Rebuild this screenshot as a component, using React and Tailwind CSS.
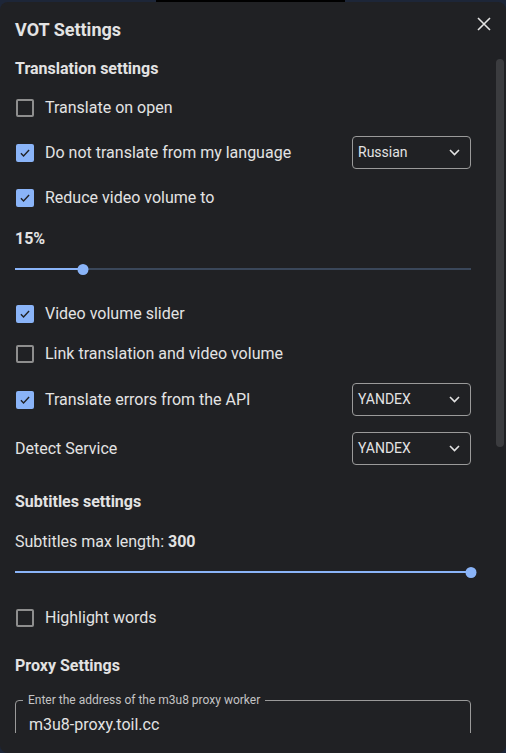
import React from "react";

const Check = ({ checked }) =>
  checked ? (
    <div className="w-[18px] h-[18px] rounded-[2px] bg-[#8ab4f8] flex items-center justify-center shrink-0">
      <svg width="14" height="14" viewBox="0 0 24 24" fill="none">
        <path d="M5 12.5l4.5 4.5L19 7" stroke="#202124" strokeWidth="2.4" />
      </svg>
    </div>
  ) : (
    <div className="w-[18px] h-[18px] rounded-[2px] border-2 border-[#8e8e8e] shrink-0" />
  );

const Select = ({ value }) => (
  <div className="w-[119px] h-[33px] border border-[#9a9a9a] rounded-[4px] flex items-center justify-between pl-[5px] pr-[10px]">
    <span className="text-[14px] text-[#e3e3e3]">{value}</span>
    <svg width="11" height="7" viewBox="0 0 11 7" fill="none">
      <path d="M1 1l4.5 4.5L10 1" stroke="#e3e3e3" strokeWidth="1.6" />
    </svg>
  </div>
);

const CheckRow = ({ checked, label, select, mt }) => (
  <div className={`flex items-center justify-between ${mt} ${select ? "h-[33px]" : "h-[24px]"}`}>
    <div className="flex items-center gap-[11px] pl-[1px]">
      <Check checked={checked} />
      <span className="text-[16px] text-[#e3e3e3]">{label}</span>
    </div>
    {select && <Select value={select} />}
  </div>
);

const Slider = ({ pct, mt }) => (
  <div className={`relative h-[12px] ${mt} flex items-center`}>
    <div className="h-[2px] w-full bg-[#3a475a] flex">
      <div className="h-full bg-[#8ab4f8]" style={{ width: `${pct}%` }} />
    </div>
    <div
      className="absolute top-[1px] w-[11px] h-[11px] rounded-full bg-[#8ab4f8] -translate-x-1/2"
      style={{ left: `${pct}%` }}
    />
  </div>
);

export default function App() {
  return (
    <div
      className="w-[506px] h-[753px] bg-[#1d2638] pt-[2px] relative overflow-hidden"
      style={{ fontFamily: "Roboto, 'Noto Sans', sans-serif" }}
    >
      <div className="absolute left-[156px] top-0 w-[189px] h-[2px] bg-black" />
      <div className="relative h-[751px] bg-[#202124] rounded-[8px] flex flex-col">
        <div className="flex items-start justify-between pl-[15px] pr-[14px] pt-[16px] h-[47px]">
          <h1 className="text-[18px] leading-[24px] font-bold text-[#e3e3e3]">VOT Settings</h1>
          <svg width="16" height="16" viewBox="0 0 16 16" className="mt-[-2px]">
            <path d="M2 2l12 12M14 2L2 14" stroke="#e3e3e3" strokeWidth="1.6" />
          </svg>
        </div>
        <div className="flex-1 overflow-hidden">
          <div className="flex flex-col pl-[15px] pr-[35px] pt-[10px]">
            <div className="h-[20px] text-[16px] leading-[20px] font-bold text-[#e3e3e3]">Translation settings</div>
            <CheckRow mt="mt-[17px]" checked={false} label="Translate on open" />
            <CheckRow mt="mt-[16px]" checked label="Do not translate from my language" select="Russian" />
            <CheckRow mt="mt-[17px]" checked label="Reduce video volume to" />
            <div className="mt-[19px] h-[20px] text-[16px] leading-[20px] font-bold text-[#e3e3e3]">15%</div>
            <Slider pct={15} mt="mt-[14px]" />
            <CheckRow mt="mt-[27px]" checked label="Video volume slider" />
            <CheckRow mt="mt-[16px]" checked={false} label="Link translation and video volume" />
            <CheckRow mt="mt-[17px]" checked label="Translate errors from the API" select="YANDEX" />
            <div className="mt-[16px] h-[33px] flex items-center justify-between">
              <span className="text-[16px] text-[#e3e3e3]">Detect Service</span>
              <Select value="YANDEX" />
            </div>
            <div className="mt-[27px] h-[20px] text-[16px] leading-[20px] font-bold text-[#e3e3e3]">Subtitles settings</div>
            <div className="mt-[20px] h-[20px] text-[16px] leading-[20px] text-[#e3e3e3]">
              Subtitles max length: <span className="font-bold">300</span>
            </div>
            <Slider pct={100} mt="mt-[14px]" />
            <CheckRow mt="mt-[28px]" checked={false} label="Highlight words" />
            <div className="mt-[26px] h-[20px] text-[16px] leading-[20px] font-bold text-[#e3e3e3]">Proxy Settings</div>
            <fieldset className="mt-[17px] border border-[#9a9a9a] rounded-[4px] pl-[7px] pr-[10px] pb-[12px] h-[70px]">
              <legend className="px-[5px] text-[12px] leading-[14px] text-[#c4c4c4]">
                Enter the address of the m3u8 proxy worker
              </legend>
              <div className="pl-[6px] pt-[8px] text-[16px] leading-[20px] text-[#e3e3e3]">m3u8-proxy.toil.cc</div>
            </fieldset>
          </div>
        </div>
        <div className="h-[20px]" />
        <div className="absolute right-[2px] top-[57px] w-[8px] h-[388px] rounded-full bg-[#3b3c3f]" />
      </div>
    </div>
  );
}
